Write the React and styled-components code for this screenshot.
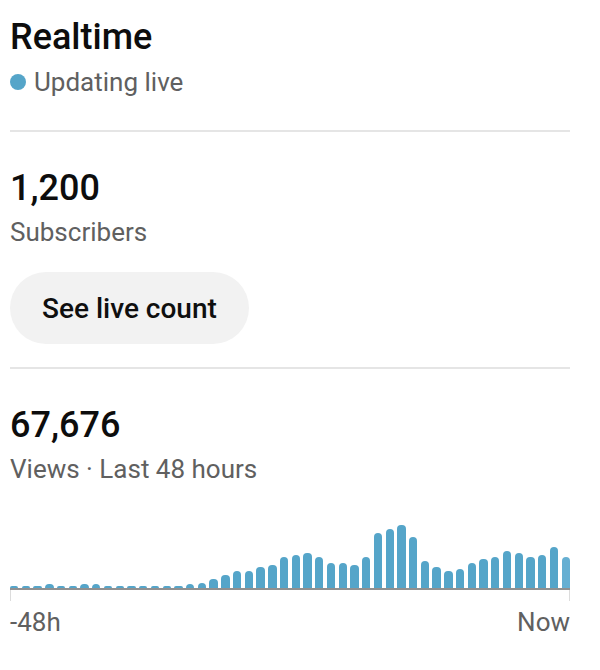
import React from "react";
import styled, { createGlobalStyle } from "styled-components";

const heights = [
  2, 2, 2, 4, 2, 2, 4, 4, 2, 2, 2, 2, 2, 2, 2, 4,
  5, 9, 13, 17, 17, 21, 23, 31, 33, 35, 31, 25, 25, 23, 31, 55,
  59, 63, 51, 27, 21, 17, 19, 25, 29, 31, 37, 35, 31, 33, 41, 31,
];

export default function App() {
  return (
    <>
      <GlobalStyle />
      <Card>
        <Title>Realtime</Title>
        <LiveRow>
          <Dot />
          <Secondary>Updating live</Secondary>
        </LiveRow>
        <Divider />
        <Section>
          <BigNumber>1,200</BigNumber>
          <Secondary>Subscribers</Secondary>
          <CountButton>See live count</CountButton>
        </Section>
        <Divider />
        <Section>
          <BigNumber>67,676</BigNumber>
          <Secondary>Views · Last 48 hours</Secondary>
          <Chart>
            <Bars>
              {heights.map((h, i) => (
                <Bar
                  key={i}
                  $last={i === heights.length - 1}
                  style={{ height: h }}
                />
              ))}
            </Bars>
            <Ticks />
            <AxisLabels>
              <Secondary>-48h</Secondary>
              <Secondary>Now</Secondary>
            </AxisLabels>
          </Chart>
        </Section>
      </Card>
    </>
  );
}

const GlobalStyle = createGlobalStyle`
  body {
    margin: 0;
    background: #ffffff;
    font-family: Roboto, "Noto Sans", "Liberation Sans", sans-serif;
  }
`;

const Card = styled.div`
  display: flex;
  flex-direction: column;
  width: 560px;
  padding: 15px 30px 0 10px;
`;

const Title = styled.div`
  font-size: 36px;
  line-height: 44px;
  font-weight: 500;
  color: #0d0d0d;
`;

const LiveRow = styled.div`
  display: flex;
  align-items: center;
  gap: 8px;
  margin-top: 5px;
`;

const Dot = styled.span`
  width: 16px;
  height: 16px;
  border-radius: 50%;
  background: #55a5c9;
  flex-shrink: 0;
`;

const Secondary = styled.div`
  font-size: 26px;
  line-height: 36px;
  color: #606060;
`;

const Divider = styled.div`
  height: 2px;
  background: #e5e5e5;
  margin-top: 30px;

  & + div {
    margin-top: 34px;
  }
`;

const Section = styled.div`
  display: flex;
  flex-direction: column;
  align-items: flex-start;
  gap: 4px;
`;

const BigNumber = styled.div`
  font-size: 36px;
  line-height: 44px;
  font-weight: 500;
  color: #0d0d0d;
`;

const CountButton = styled.button`
  margin-top: 18px;
  margin-bottom: -7px;
  height: 72px;
  padding: 0 32px;
  border: none;
  border-radius: 36px;
  background: #f2f2f2;
  color: #0f0f0f;
  font-family: inherit;
  font-size: 28px;
  font-weight: 500;
  cursor: pointer;
`;

const Chart = styled.div`
  align-self: stretch;
  display: flex;
  flex-direction: column;
`;

const Bars = styled.div`
  display: flex;
  align-items: flex-end;
  gap: 3.4px;
  height: 97px;
  border-bottom: 2px solid #909090;
`;

const Bar = styled.div`
  flex: 1;
  border-radius: 4px 4px 0 0;
  background: ${(p) => (p.$last ? "#66afd2" : "#55a5c9")};
`;

const Ticks = styled.div`
  height: 11px;
  border-left: 1px solid #dcdcdc;
  border-right: 1px solid #dcdcdc;
`;

const AxisLabels = styled.div`
  display: flex;
  justify-content: space-between;
  margin-top: 3px;
`;
